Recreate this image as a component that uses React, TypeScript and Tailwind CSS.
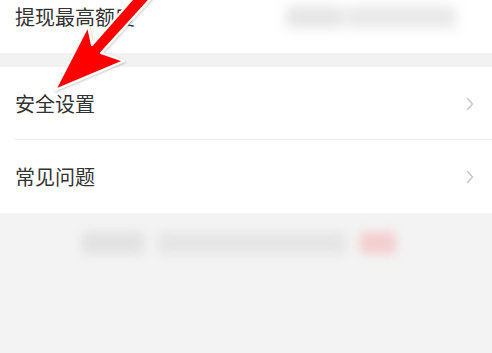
import React from "react";

const Chevron = () => (
  <svg width="8" height="14" viewBox="0 0 8 14" fill="none" className="shrink-0">
    <path d="M1.5 1.5 L6.5 7 L1.5 12.5" stroke="#c4c4c4" strokeWidth="1.3" strokeLinejoin="round" strokeLinecap="round" />
  </svg>
);

const Row = ({ label, chevron = true, divider = false }: { label: string; chevron?: boolean; divider?: boolean }) => (
  <div className="relative flex h-[73px] items-center justify-between pl-[15px] pr-[18px]">
    <span className="text-[20px] leading-none text-[#333333]">{label}</span>
    {chevron && <Chevron />}
    {divider && <div className="absolute bottom-0 left-[14px] right-0 h-px bg-[#eeeeee]" />}
  </div>
);

export default function App() {
  return (
    <div
      className="relative h-[353px] w-[492px] overflow-hidden bg-[#f3f3f3]"
      style={{ fontFamily: '"Noto Sans CJK SC", "Noto Sans", sans-serif' }}
    >
      {/* first group, scrolled up */}
      <div className="mt-[-20px] bg-white">
        <div className="flex h-[73px] items-center justify-between pl-[15px] pr-[36px]">
          <span className="text-[20px] leading-none text-[#333333]">提现最高额度</span>
          <div className="flex h-[22px] w-[170px] gap-2 rounded bg-[#f0f0f0] blur-[6px]">
            <div className="h-full w-[55px] rounded bg-[#e6e6e6]" />
            <div className="h-full flex-1 rounded bg-[#e9e9e9]" />
          </div>
        </div>
      </div>

      <div className="h-[14px] bg-[#f2f2f2]" />

      <div className="bg-white">
        <Row label="安全设置" divider />
        <Row label="常见问题" />
      </div>

      {/* blurred footer note */}
      <div className="flex items-center gap-[14px] pl-[82px] pt-[19px]">
        <div className="h-[22px] w-[62px] rounded bg-[#e2e2e2] blur-[5px]" />
        <div className="h-[22px] w-[188px] rounded bg-[#e6e6e6] blur-[5px]" />
        <div className="h-[22px] w-[36px] rounded bg-[#f4cfcf] blur-[5px]" />
      </div>

      {/* red annotation arrow */}
      <svg className="absolute left-0 top-0" width="200" height="110" viewBox="0 0 200 110">
        <defs>
          <filter id="sh" x="-20%" y="-20%" width="140%" height="140%">
            <feDropShadow dx="0.5" dy="1" stdDeviation="1.2" floodColor="#000" floodOpacity="0.25" />
          </filter>
        </defs>
        <polygon
          points="55,90 88,26 92,45 135,-4 153,-4 101,53 124,61"
          fill="#ff0000"
          stroke="#ffffff"
          strokeWidth="2.2"
          strokeLinejoin="round"
          filter="url(#sh)"
        />
      </svg>
    </div>
  );
}
